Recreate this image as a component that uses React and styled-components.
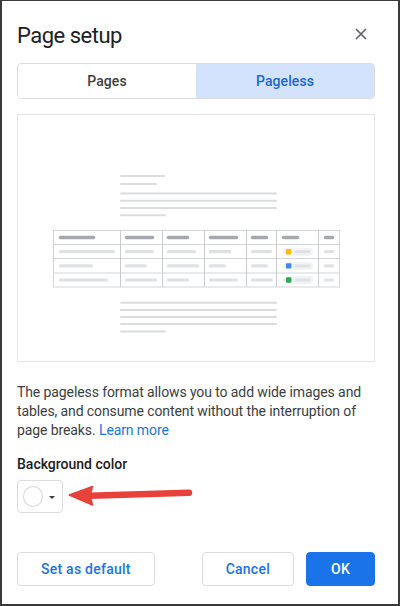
import React from 'react';
import styled, { createGlobalStyle } from 'styled-components';

const GlobalStyle = createGlobalStyle`
  html, body {
    margin: 0;
    padding: 0;
    background: #ffffff;
  }
  * {
    box-sizing: border-box;
  }
`;

const Frame = styled.div`
  width: 400px;
  height: 606px;
  border: 2px solid #3a3a3a;
  border-top-width: 1px;
  padding: 21px 23px 0 15px;
  background: #ffffff;
  font-family: Roboto, "Liberation Sans", Arial, sans-serif;
  color: #3c4043;
`;

const Header = styled.div`
  display: flex;
  justify-content: space-between;
  align-items: flex-start;
  height: 28px;
`;

const Title = styled.h1`
  margin: 0;
  font-size: 22px;
  font-weight: 400;
  line-height: 28px;
  letter-spacing: -0.5px;
  color: #202124;
`;

const CloseButton = styled.button`
  width: 24px;
  height: 24px;
  margin: 0 2px 0 0;
  padding: 0;
  border: none;
  background: none;
  display: flex;
  align-items: center;
  justify-content: center;
`;

const Tabs = styled.div`
  display: flex;
  height: 36px;
  margin-top: 13px;
  border: 1px solid #dadce0;
  border-radius: 4px;
  overflow: hidden;
`;

const Tab = styled.button`
  flex: 1;
  border: none;
  margin: 0;
  font-family: inherit;
  font-size: 14px;
  font-weight: 500;
  letter-spacing: 0.1px;
  background: ${p => (p.$active ? '#d3e3fd' : '#ffffff')};
  color: ${p => (p.$active ? '#1967d2' : '#3c4043')};
`;

const Preview = styled.div`
  margin-top: 15px;
  height: 248px;
  border: 1px solid #e3e3e3;
  display: flex;
`;

const Description = styled.p`
  margin: 21px 0 0;
  font-size: 14px;
  line-height: 19px;
  letter-spacing: -0.1px;
  color: #3c4043;
`;

const LearnMore = styled.a`
  color: #1a73e8;
  text-decoration: none;
`;

const Label = styled.div`
  margin-top: 15px;
  font-size: 14px;
  font-weight: 500;
  line-height: 19px;
  color: #202124;
`;

const ColorRow = styled.div`
  position: relative;
  margin-top: 6px;
  height: 33px;
`;

const ColorButton = styled.button`
  display: flex;
  align-items: center;
  gap: 6px;
  width: 46px;
  height: 33px;
  padding: 0 7px 0 5px;
  border: 1px solid #dadce0;
  border-radius: 4px;
  background: #ffffff;
`;

const Swatch = styled.span`
  width: 21px;
  height: 21px;
  border-radius: 50%;
  border: 1px solid #d4d6da;
  background: ${p => p.$color};
`;

const Caret = styled.span`
  width: 0;
  height: 0;
  margin-top: 2px;
  border-left: 3px solid transparent;
  border-right: 3px solid transparent;
  border-top: 3px solid #3c4043;
`;

const Annotation = styled.svg`
  position: absolute;
  left: 49px;
  top: 0;
`;

const Footer = styled.div`
  display: flex;
  align-items: center;
  gap: 12px;
  margin-top: 39px;
`;

const Spacer = styled.div`
  flex: 1;
`;

const Button = styled.button`
  height: 34px;
  padding: 0 ${p => (p.$primary ? '24px' : '23px')};
  border: 1px solid ${p => (p.$primary ? '#1a73e8' : '#dadce0')};
  border-radius: 4px;
  background: ${p => (p.$primary ? '#1a73e8' : '#ffffff')};
  color: ${p => (p.$primary ? '#ffffff' : '#1a73e8')};
  font-family: inherit;
  font-size: 14px;
  font-weight: 500;
  letter-spacing: 0.25px;
`;

const CloseIcon = () => (
  <svg width="12" height="12" viewBox="0 0 12 12">
    <path d="M1 1 L11 11 M11 1 L1 11" stroke="#5f6368" strokeWidth="1.6" fill="none" />
  </svg>
);

// illustration of a pageless doc: text lines around a wide table
const Line = ({ x1, x2, y, color = '#dadce0', w = 2 }) => (
  <line x1={x1} x2={x2} y1={y} y2={y} stroke={color} strokeWidth={w} strokeLinecap="round" />
);

const headerBars = [[59, 95], [125, 154], [167, 189], [209, 238], [251, 268], [282, 299], [324, 334]];
const rows = [
  { y: 251.7, bars: [[59, 115], [125, 154], [167, 196], [209, 231], [251, 272]], chip: '#fbbc04' },
  { y: 265.9, bars: [[59, 93], [125, 147], [167, 199], [209, 226], [251, 268]], chip: '#4285f4' },
  { y: 280, bars: [[59, 108], [125, 157], [167, 189], [209, 238], [251, 273]], chip: '#34a853' },
];
const colLines = [120.5, 162.5, 204.5, 246.5, 276.5, 318.5];
const rowLines = [244.5, 258.5, 273];

const PreviewArt = () => (
  <svg width="356" height="246" viewBox="18 115 356 246">
    <Line x1={121} x2={164} y={176} />
    <Line x1={121} x2={156} y={184} />
    <Line x1={121} x2={276} y={193.5} />
    <Line x1={121} x2={276} y={200.7} />
    <Line x1={121} x2={276} y={208} />
    <Line x1={121} x2={165} y={215.3} />

    <rect x="53.5" y="230.5" width="286" height="56.5" fill="none" stroke="#d3d5d8" strokeWidth="1" />
    {rowLines.map(y => (
      <line key={y} x1="53.5" x2="339.5" y1={y} y2={y} stroke="#d3d5d8" strokeWidth="1" />
    ))}
    {colLines.map(x => (
      <line key={x} x1={x} x2={x} y1="230.5" y2="287" stroke="#c9cbcf" strokeWidth="1" />
    ))}
    {headerBars.map(([a, b]) => (
      <Line key={a} x1={a + 1.5} x2={b - 1.5} y={237.6} color="#a4a8ad" w={3.5} />
    ))}
    {rows.map(r => (
      <g key={r.y}>
        {r.bars.map(([a, b]) => (
          <Line key={a} x1={a + 1.5} x2={b - 1.5} y={r.y} color="#dfe1e4" w={3.2} />
        ))}
        <rect x="283" y={r.y - 4} width="30" height="8" rx="4" fill="#f1f3f4" />
        <rect x="286" y={r.y - 2.7} width="5.4" height="5.4" rx="1" fill={r.chip} />
        <Line x1={296} x2={309} y={r.y} color="#dfe1e4" w={3} />
        <Line x1={325.5} x2={332.5} y={r.y} color="#dfe1e4" w={3.2} />
      </g>
    ))}

    <Line x1={121} x2={276} y={302.7} />
    <Line x1={121} x2={276} y={310} />
    <Line x1={121} x2={276} y={317} />
    <Line x1={121} x2={276} y={324} />
    <Line x1={121} x2={165} y={331.5} />
  </svg>
);

const Arrow = () => (
  <Annotation width="130" height="34" viewBox="0 0 130 34">
    <line x1="24" y1="15.8" x2="123" y2="12.8" stroke="#e8413b" strokeWidth="6.5" strokeLinecap="round" />
    <path d="M3.3 15 L26.5 6.5 L24 15.8 L26.5 25 Z" fill="#e8413b" stroke="#e8413b" strokeWidth="1.5" strokeLinejoin="round" />
  </Annotation>
);

export default function App() {
  return (
    <>
      <GlobalStyle />
      <Frame>
        <Header>
          <Title>Page setup</Title>
          <CloseButton aria-label="Close">
            <CloseIcon />
          </CloseButton>
        </Header>

        <Tabs>
          <Tab>Pages</Tab>
          <Tab $active>Pageless</Tab>
        </Tabs>

        <Preview>
          <PreviewArt />
        </Preview>

        <Description>
          The pageless format allows you to add wide images and tables, and consume content
          without the interruption of page breaks. <LearnMore href="#">Learn more</LearnMore>
        </Description>

        <Label>Background color</Label>
        <ColorRow>
          <ColorButton>
            <Swatch $color="#ffffff" />
            <Caret />
          </ColorButton>
          <Arrow />
        </ColorRow>

        <Footer>
          <Button>Set as default</Button>
          <Spacer />
          <Button>Cancel</Button>
          <Button $primary>OK</Button>
        </Footer>
      </Frame>
    </>
  );
}
